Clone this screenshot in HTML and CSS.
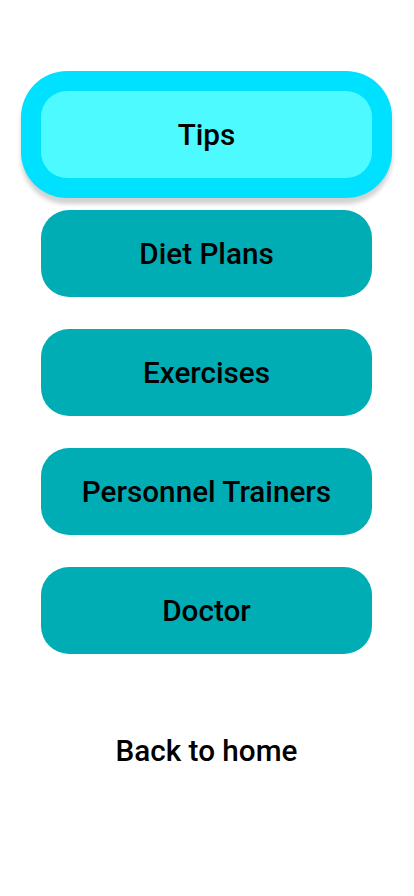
FILE: index.html
```html
<!DOCTYPE html>
<html>
<head>
<meta charset="utf-8">
<link rel="stylesheet" href="styles.css">
</head>
<body>
<main class="menu">
  <button class="btn btn-active">Tips</button>
  <button class="btn">Diet Plans</button>
  <button class="btn">Exercises</button>
  <button class="btn">Personnel Trainers</button>
  <button class="btn">Doctor</button>
  <a class="back" href="#">Back to home</a>
</main>
</body>
</html>
```
FILE: styles.css
```css
html, body {
  margin: 0;
  padding: 0;
  background: #ffffff;
}
body {
  width: 414px;
  height: 896px;
  font-family: Roboto, "Noto Sans", sans-serif;
}
.menu {
  display: flex;
  flex-direction: column;
  align-items: center;
  padding: 91px 42px 0 41px;
  gap: 32px;
}
.btn {
  width: 331px;
  height: 87px;
  border: none;
  border-radius: 28px;
  background: #00adb5;
  color: #000;
  font-family: Roboto, "Noto Sans", sans-serif;
  font-size: 29.7px;
  font-weight: 500;
  padding: 0;
}
.btn-active {
  background: #4cfaff;
  box-shadow: 0 0 0 20px #00e0ff, 0 6px 4px 20px rgba(0,0,0,0.18);
  border-radius: 26px;
}
.back {
  margin-top: 48px;
  color: #000;
  text-decoration: none;
  font-size: 29.7px;
  font-weight: 500;
  line-height: 34px;
}
```
